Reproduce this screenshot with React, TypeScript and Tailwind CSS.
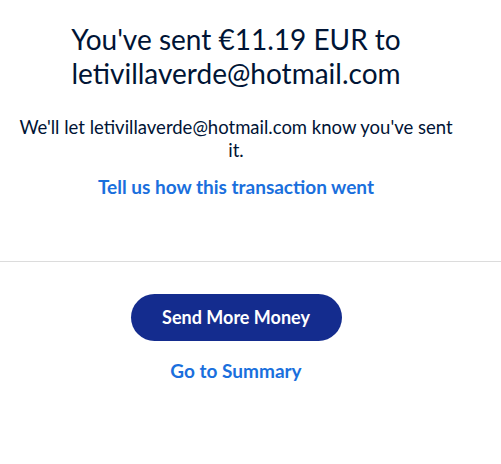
export default function App() {
  return (
    <div className="min-h-[464px] w-[501px] bg-white font-['Lato',sans-serif] text-[#001435]">
      <div className="w-[472px] flex flex-col items-center text-center pt-[22px]">
        <h1 className="text-[28px] leading-[34px] font-normal text-[#001435]">
          You've sent €11.19 EUR to
          <br />
          letivillaverde@hotmail.com
        </h1>
        <p className="mt-[26px] max-w-[440px] text-[18.5px] leading-[23px]">
          We'll let letivillaverde@hotmail.com know you've sent it.
        </p>
        <a href="#" className="mt-[13px] text-[19px] leading-[23px] font-bold text-[#1a6fdd]">
          Tell us how this transaction went
        </a>
      </div>
      <div className="mt-[63px] h-px w-full bg-[#dcdcdc]" />
      <div className="w-[472px] flex flex-col items-center pt-[32px]">
        <button className="h-[47px] w-[211px] rounded-full bg-[#142c8e] text-[18px] font-bold text-white">
          Send More Money
        </button>
        <a href="#" className="mt-[18px] text-[19px] leading-[23px] font-bold text-[#1a6fdd]">
          Go to Summary
        </a>
      </div>
    </div>
  );
}
